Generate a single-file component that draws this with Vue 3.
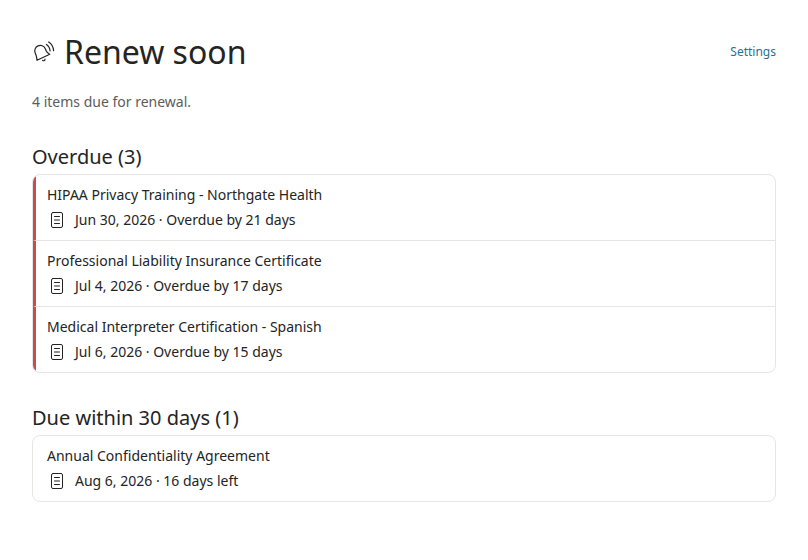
<template>
  <main class="renewals">
    <header class="page-header">
      <h1 class="page-title">
        <svg class="bell" viewBox="0 0 24 24" aria-hidden="true">
          <path d="M5 20.300 17.800 14.200C15.600 13.500 14.800 12.500 14 10.500L13.300 8.700A5.500 5.500 0 0 0 3.200 13.100l.7 1.700c.8 2 .9 3.500 1.100 5.500z" />
          <path d="M10.600 20.300c.9.9 2.400.3 2.400-1.100" />
          <path d="M14.400 4.500c2.200 1.400 3.500 3.600 3.700 6.500M16.700 2c3 2 4.700 5 4.900 8.600" />
        </svg>
        <span>Renew soon</span>
      </h1>
      <a class="settings-link" href="#settings">Settings</a>
    </header>

    <p class="summary">{{ total }} items due for renewal.</p>

    <section v-for="group in groups" :key="group.title" class="group">
      <h2 class="group-title">{{ group.title }} ({{ group.items.length }})</h2>
      <ul class="item-list">
        <li
          v-for="item in group.items"
          :key="item.name"
          class="item"
          :class="{ overdue: group.overdue }"
        >
          <div class="item-name">{{ item.name }}</div>
          <div class="item-meta">
            <svg class="doc" viewBox="0 0 20 20" aria-hidden="true">
              <rect x="4.500" y="2.500" width="11" height="15" rx="1.500" />
              <path d="M7.500 6.500h5M7.500 10h5M7.500 13.500h5" />
            </svg>
            <span>{{ item.date }} · {{ item.status }}</span>
          </div>
        </li>
      </ul>
    </section>
  </main>
</template>

<script setup>
import { computed } from 'vue'

const groups = [
  {
    title: 'Overdue',
    overdue: true,
    items: [
      { name: 'HIPAA Privacy Training - Northgate Health', date: 'Jun 30, 2026', status: 'Overdue by 21 days' },
      { name: 'Professional Liability Insurance Certificate', date: 'Jul 4, 2026', status: 'Overdue by 17 days' },
      { name: 'Medical Interpreter Certification - Spanish', date: 'Jul 6, 2026', status: 'Overdue by 15 days' },
    ],
  },
  {
    title: 'Due within 30 days',
    overdue: false,
    items: [
      { name: 'Annual Confidentiality Agreement', date: 'Aug 6, 2026', status: '16 days left' },
    ],
  },
]

const total = computed(() => groups.reduce((sum, group) => sum + group.items.length, 0))
</script>

<style>
body {
  background: #fff;
}
</style>

<style scoped>
.renewals {
  padding: 28px 32px;
  font-family: "Noto Sans", sans-serif;
  font-size: 14px;
  line-height: 20px;
  color: #242424;
}

.page-header {
  display: flex;
  align-items: center;
  justify-content: space-between;
}

.page-title {
  display: flex;
  align-items: center;
  gap: 8px;
  margin: 0;
  font-size: 32px;
  font-weight: 400;
  line-height: 48px;
}

.bell,
.doc {
  flex-shrink: 0;
  fill: none;
  stroke: #242424;
  stroke-linecap: round;
  stroke-linejoin: round;
}

.bell {
  width: 24px;
  height: 24px;
  stroke-width: 1.2;
}

.settings-link {
  font-size: 12px;
  color: #1f7396;
  text-decoration: none;
}

.settings-link:hover {
  text-decoration: underline;
}

.summary {
  margin: 16px 0 0;
  color: #5c5c5c;
}

.group {
  margin-top: 32px;
}

.group-title {
  margin: 0 0 4px;
  font-size: 20px;
  font-weight: 400;
  line-height: 26px;
}

.item-list {
  margin: 0;
  padding: 0;
  list-style: none;
  border: 1px solid #e5e5e2;
  border-radius: 8px;
  overflow: hidden;
}

.item {
  padding: 10px 14px;
}

.item.overdue {
  padding-left: 11px;
  border-left: 3px solid #cb4a4e;
}

.item + .item {
  border-top: 1px solid #e5e5e2;
}

.item-meta {
  display: flex;
  align-items: center;
  gap: 8px;
  margin-top: 5px;
}

.doc {
  width: 20px;
  height: 20px;
}
</style>
